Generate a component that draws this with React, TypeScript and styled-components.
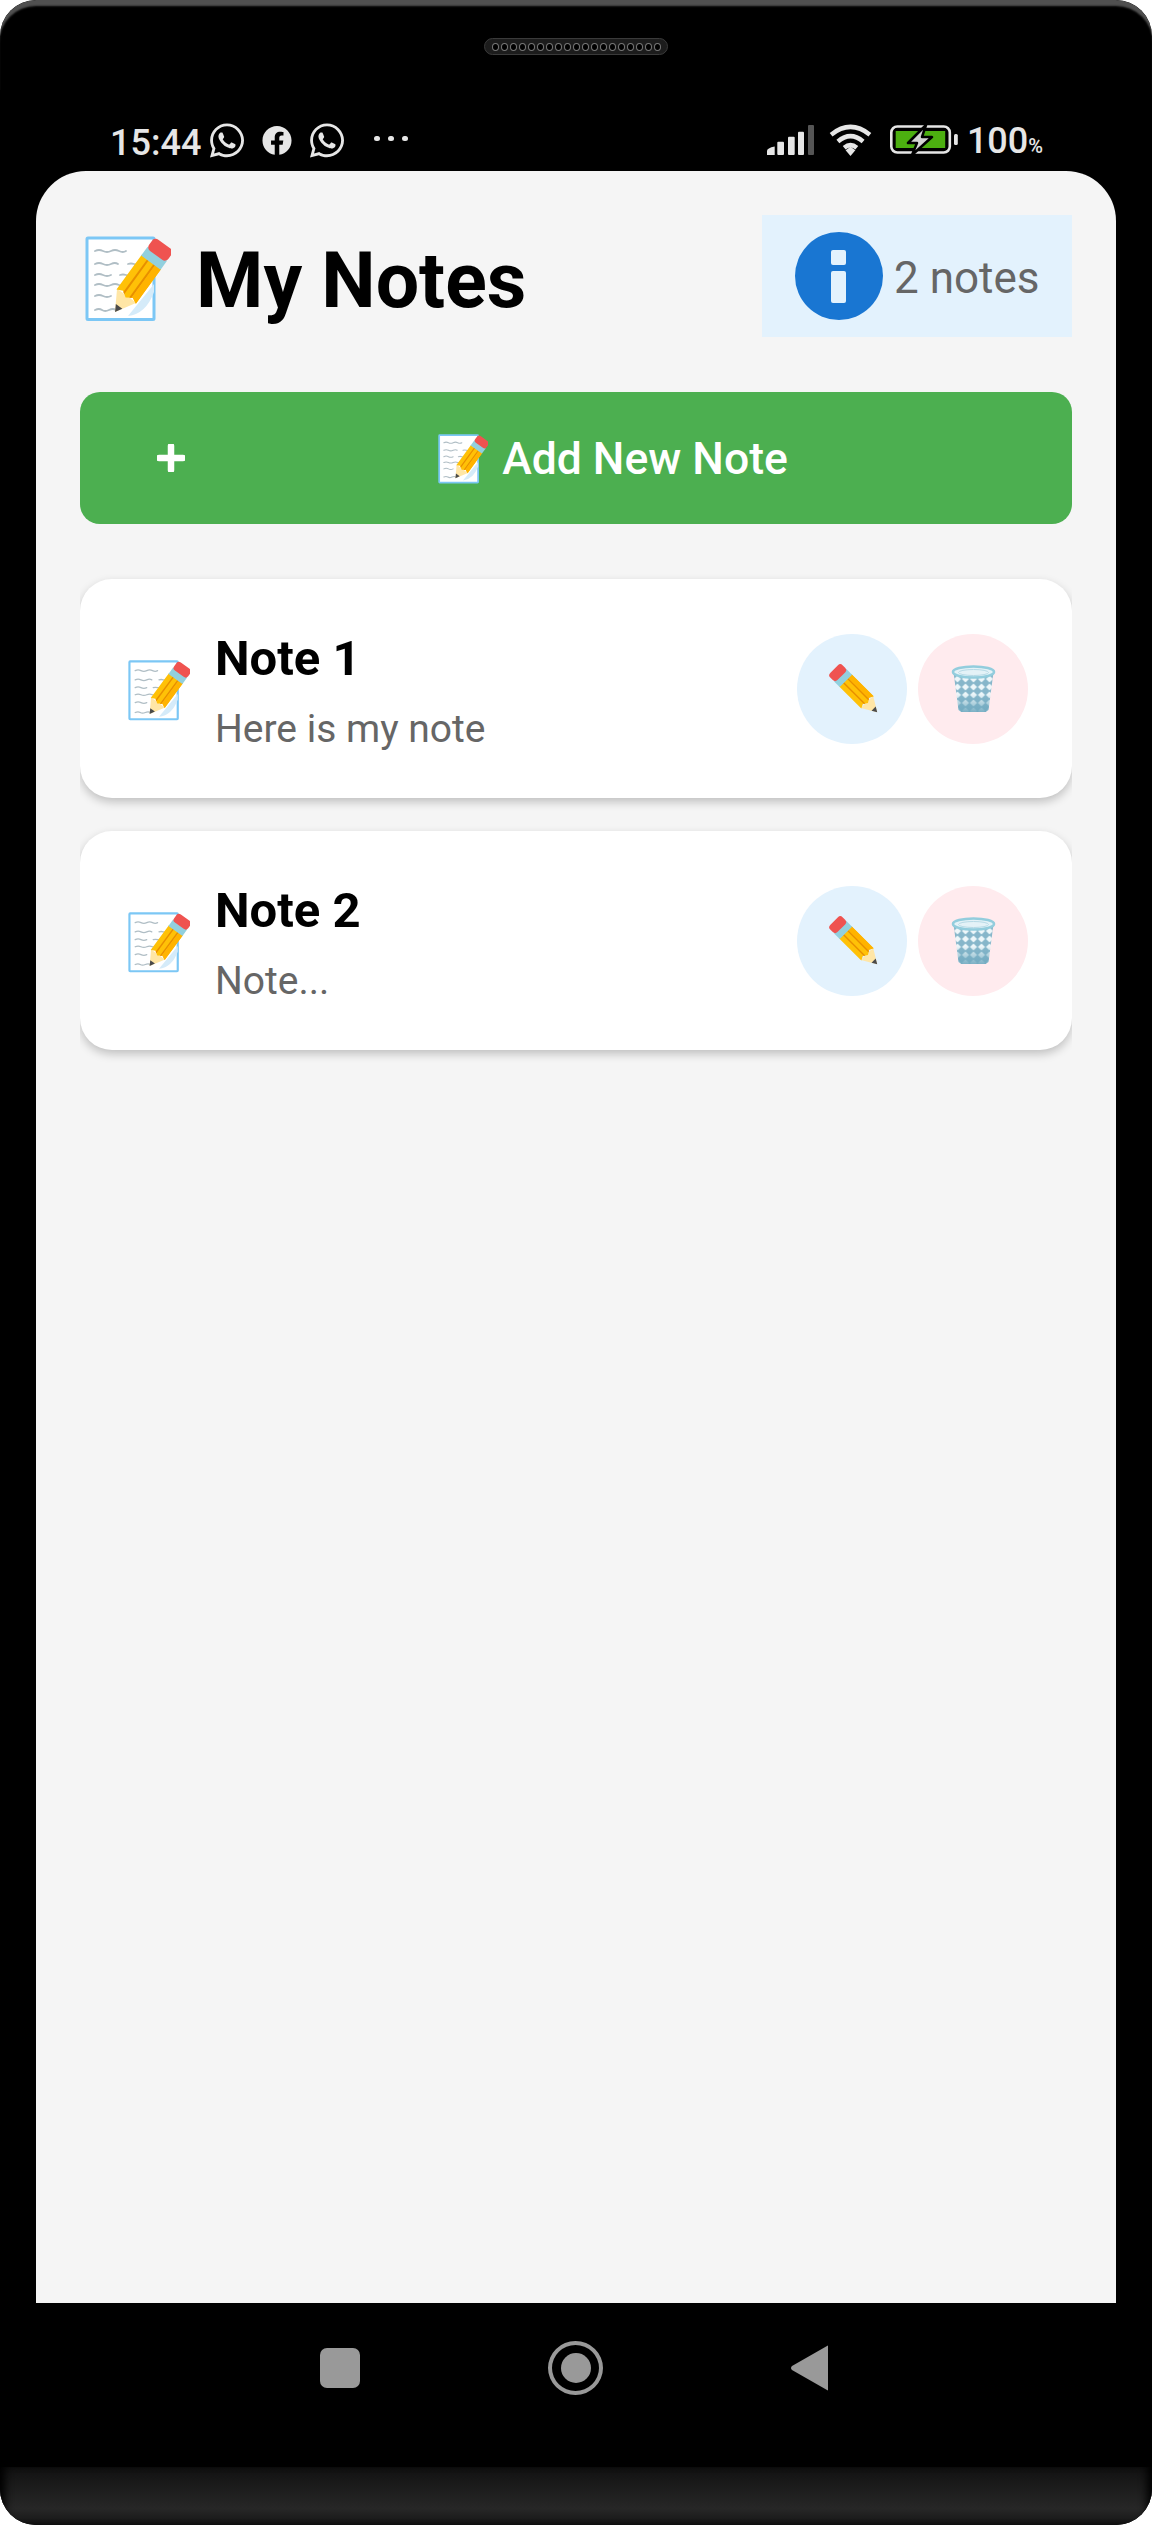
import React from "react";
import styled, { createGlobalStyle } from "styled-components";
import { FaWhatsapp, FaFacebook } from "react-icons/fa";

const Global = createGlobalStyle`
  html, body { margin: 0; padding: 0; background: #fff; }
  body { font-family: Roboto, "Noto Sans", sans-serif; }
  * { box-sizing: border-box; }
`;

const Phone = styled.div`
  position: relative;
  width: 1152px;
  height: 2525px;
  display: flex;
  flex-direction: column;
  background: #000;
  border-radius: 36px;
  overflow: hidden;
  &::before {
    content: "";
    position: absolute;
    left: 0;
    right: 0;
    top: 0;
    height: 90px;
    border-radius: 36px 36px 0 0;
    box-shadow: inset 0 7px 2px -1px #505050;
    pointer-events: none;
  }
`;

const Bezel = styled.div`
  height: 171px;
  padding-top: 38px;
  display: flex;
  flex-direction: column;
  align-items: center;
`;

const Speaker = styled.div`
  width: 184px;
  height: 17px;
  display: flex;
  align-items: center;
  justify-content: center;
  gap: 2px;
  background: #1c1c1c;
  border: 1px solid #3a3a3a;
  border-radius: 9px;
`;

const SpeakerHole = styled.span`
  width: 7px;
  height: 8px;
  border-radius: 50%;
  background: #000;
  border: 1px solid #777;
`;

const StatusBar = styled.div`
  width: 100%;
  height: 34px;
  margin-top: 68px;
  padding: 0 109px 0 110px;
  display: flex;
  align-items: center;
  justify-content: space-between;
  color: #e6e6e6;
`;

const StatusGroup = styled.div`
  display: flex;
  align-items: center;
`;

const Clock = styled.span`
  width: 91px;
  margin-right: 9px;
  margin-top: 6px;
  font-size: 36px;
  font-weight: 500;
  line-height: 34px;
  white-space: nowrap;
`;

const StatusApp = styled.span<{ $w: number; $size: number; $gap: number }>`
  width: ${(p) => p.$w}px;
  height: 34px;
  margin-right: ${(p) => p.$gap}px;
  display: flex;
  align-items: center;
  justify-content: center;
  font-size: ${(p) => p.$size}px;
`;

const Dots = styled.div`
  display: flex;
  gap: 8.5px;
  margin-top: -3px;
`;

const Dot = styled.span`
  width: 5.7px;
  height: 5.7px;
  border-radius: 50%;
  background: #e6e6e6;
`;

const StatusIcon = styled.svg<{ $w: number; $h: number; $mr: number }>`
  display: block;
  width: ${(p) => p.$w}px;
  height: ${(p) => p.$h}px;
  margin-right: ${(p) => p.$mr}px;
`;

const Percent = styled.span`
  margin-top: 6px;
  font-size: 36px;
  font-weight: 500;
  line-height: 34px;
  white-space: nowrap;
`;

const PercentSign = styled.span`
  font-size: 20px;
`;

const Screen = styled.main`
  width: 1080px;
  height: 2132px;
  margin: 0 36px;
  padding: 44px 44px 0;
  background: #f5f5f5;
  border-radius: 50px 50px 0 0;
`;

const Header = styled.header`
  height: 122px;
  display: flex;
  align-items: center;
  justify-content: space-between;
`;

const TitleRow = styled.div`
  padding: 6px 0 0 5px;
  display: flex;
  align-items: center;
`;

const Title = styled.h1`
  margin: 3px 0 0 25px;
  font-size: 77px;
  line-height: 90px;
  font-weight: 700;
  color: #000;
`;

const Badge = styled.div`
  width: 310px;
  height: 122px;
  padding-left: 33px;
  display: flex;
  align-items: center;
  gap: 11px;
  background: #e3f2fd;
`;

const InfoIcon = styled.svg`
  display: block;
  width: 88px;
  height: 88px;
`;

const BadgeText = styled.span`
  padding-top: 3px;
  font-size: 44px;
  line-height: 60px;
  color: #666;
`;

const AddButton = styled.button`
  width: 100%;
  height: 132px;
  margin-top: 55px;
  padding: 0 31px 0 77px;
  display: flex;
  align-items: center;
  border: 0;
  border-radius: 20px;
  background: #4caf50;
  color: #fff;
  font-family: inherit;
`;

const PlusIcon = styled.svg`
  display: block;
  flex: none;
  width: 28px;
  height: 28px;
`;

const AddLabel = styled.span`
  flex: 1;
  padding-top: 2px;
  display: flex;
  align-items: center;
  justify-content: center;
  gap: 14px;
  font-size: 44.5px;
  line-height: 60px;
  font-weight: 500;
`;

const CardList = styled.section`
  margin-top: 55px;
  display: flex;
  flex-direction: column;
  gap: 33px;
  overflow-x: clip;
  overflow-y: visible;
`;

const Card = styled.article`
  height: 219px;
  padding: 0 44px 0 48px;
  display: flex;
  align-items: center;
  background: #fff;
  border-radius: 32px;
  box-shadow: 0 4px 10px rgba(0, 0, 0, 0.22);
`;

const CardEmoji = styled.div`
  padding-top: 3px;
`;

const CardBody = styled.div`
  flex: 1;
  margin-left: 25px;
  padding-top: 6px;
`;

const CardTitle = styled.h2`
  margin: 0;
  font-size: 49px;
  line-height: 60px;
  font-weight: 700;
  color: #000;
`;

const CardText = styled.p`
  margin: 15px 0 0;
  font-size: 39px;
  line-height: 50px;
  color: #666;
`;

const RoundButton = styled.button<{ $bg: string }>`
  width: 110px;
  height: 110px;
  margin-left: 11px;
  padding: 0;
  display: flex;
  align-items: center;
  justify-content: center;
  border: 0;
  border-radius: 50%;
  background: ${(p) => p.$bg};
`;

const EmojiSvg = styled.svg<{ $w: number; $h: number }>`
  display: block;
  flex: none;
  width: ${(p) => p.$w}px;
  height: ${(p) => p.$h}px;
`;

const NavBar = styled.nav`
  height: 164px;
  padding: 0 3px 34px 0;
  display: flex;
  align-items: center;
  justify-content: center;
  gap: 188px;
`;

const NavSquare = styled.span`
  width: 40px;
  height: 40px;
  border-radius: 7px;
  background: #999;
`;

const NavCircle = styled.span`
  width: 55px;
  height: 54px;
  display: flex;
  align-items: center;
  justify-content: center;
  border: 4px solid #999;
  border-radius: 50%;
  &::after {
    content: "";
    width: 30px;
    height: 30px;
    border-radius: 50%;
    background: #999;
  }
`;

const NavBack = styled.svg`
  display: block;
  width: 38px;
  height: 46px;
`;

const Chin = styled.div`
  height: 58px;
  background: linear-gradient(#111 0%, #1f1f1f 45%, #272727 72%, #141414 100%);
  box-shadow: inset 9px 0 9px -4px #000, inset -9px 0 9px -4px #000;
`;

const PencilShape = () => (
  <>
    <polygon points="0,0 -12,-20 12,-20" fill="#ffe6a6" />
    <polygon points="0,0 -4,-7 4,-7" fill="#4a4a4a" />
    <polygon points="-12,-19 -12,-62 12,-62 12,-19 6,-22 0,-18 -6,-22" fill="#ffc107" />
    <polygon points="-5,-62 -3,-62 -3,-20 -5,-21" fill="#e88f00" />
    <polygon points="3,-62 5,-62 5,-21 3,-20" fill="#e88f00" />
    <polygon points="5,-62 12,-62 12,-19 6,-22 5,-21" fill="#ffb300" />
    <rect x="-12" y="-72" width="24" height="11" fill="#92d0de" />
    <rect x="-12" y="-84" width="24" height="14" rx="4.5" fill="#ef5350" />
  </>
);

const MemoEmoji = ({ w, h }: { w: number; h: number }) => (
  <EmojiSvg $w={w} $h={h} viewBox="15 12 86 86" preserveAspectRatio="none">
    <rect x="17" y="14" width="67" height="81.5" rx="1" fill="#fff" stroke="#7cc7f5" strokeWidth="3" />
    <path d="M58 92 Q76 90 84 68 L84 60 Z" fill="#d5ebf9" />
    <g fill="none" stroke="#b0bec5" strokeWidth="1.8" strokeLinecap="round">
      <path d="M25 27q4-2 8 0t8 0 8 0 7 0" />
      <path d="M25 40q4-2 8 0t8 0 7 0" />
      <path d="M58 40q3-1 6 0t6 0" />
      <path d="M25 51q4-2 8 0t8 0" />
      <path d="M50 51q3-1 6 0t6 0" />
      <path d="M25 61q4-2 8 0t8 0 8 0 8 0 8 0" />
      <path d="M25 72q4-2 8 0t8 0" />
      <path d="M25 86q4-2 7 0t7 0 7 0" />
    </g>
    <g transform="translate(45 88) rotate(36)">
      <PencilShape />
    </g>
  </EmojiSvg>
);

const PencilEmoji = () => (
  <EmojiSvg $w={52} $h={49} viewBox="0 0 68 64">
    <g transform="translate(67 63) rotate(-45) scale(0.95)">
      <PencilShape />
    </g>
  </EmojiSvg>
);

const TrashEmoji = ({ id }: { id: number }) => (
  <EmojiSvg $w={45} $h={47} viewBox="0 0 44 47">
    <defs>
      <pattern id={`lattice${id}`} width="8" height="8" patternUnits="userSpaceOnUse" patternTransform="translate(2 2)">
        <rect width="8" height="8" fill="#86b6ca" />
        <polygon points="4,0.5 7.5,4 4,7.5 0.5,4" fill="#eef7fa" />
      </pattern>
      <linearGradient id={`fade${id}`} x1="0" y1="0" x2="0" y2="1">
        <stop offset="0.55" stopColor="#6fa9bf" stopOpacity="0" />
        <stop offset="1" stopColor="#6fa9bf" stopOpacity="0.9" />
      </linearGradient>
    </defs>
    <polygon points="2,7 42,7 37,45 34,47 10,47 7,45" fill={`url(#lattice${id})`} />
    <polygon points="2,7 42,7 37,45 34,47 10,47 7,45" fill={`url(#fade${id})`} />
    <ellipse cx="22" cy="7" rx="20.5" ry="5.5" fill="#e4f2f7" stroke="#93cddd" strokeWidth="2.6" />
    <ellipse cx="22" cy="7.5" rx="15" ry="3" fill="none" stroke="#b7dae6" strokeWidth="1" />
  </EmojiSvg>
);

const notes = [
  { id: 1, title: "Note 1", text: "Here is my note" },
  { id: 2, title: "Note 2", text: "Note..." },
];

export default function App() {
  return (
    <>
      <Global />
      <Phone>
        <Bezel>
          <Speaker>
            {Array.from({ length: 19 }, (_, i) => (
              <SpeakerHole key={i} />
            ))}
          </Speaker>
          <StatusBar>
            <StatusGroup>
              <Clock>15:44</Clock>
              <StatusApp $w={34} $size={39} $gap={18}>
                <FaWhatsapp />
              </StatusApp>
              <StatusApp $w={30} $size={31} $gap={18}>
                <FaFacebook />
              </StatusApp>
              <StatusApp $w={34} $size={39} $gap={30}>
                <FaWhatsapp />
              </StatusApp>
              <Dots>
                <Dot />
                <Dot />
                <Dot />
              </Dots>
            </StatusGroup>
            <StatusGroup>
              <StatusIcon $w={47} $h={30} $mr={14} viewBox="0 0 47 30">
                <path d="M0 30v-4q0-3 7.7-4.5V30z" fill="#e6e6e6" />
                <rect x="10.3" y="16.7" width="6.7" height="13.3" rx="1" fill="#e6e6e6" />
                <rect x="21" y="11.7" width="6.7" height="18.3" rx="1" fill="#e6e6e6" />
                <rect x="31" y="6.7" width="6" height="23.3" rx="1" fill="#e6e6e6" />
                <rect x="41" y="0" width="6" height="30" rx="1" fill="#555" />
              </StatusIcon>
              <StatusIcon $w={45} $h={32} $mr={17} viewBox="0 0 44 33">
                <g fill="none" stroke="#e6e6e6" strokeWidth="4.6">
                  <path d="M2 11Q22 -5 42 11" />
                  <path d="M9 18Q22 7 35 18" />
                  <path d="M15.5 24.5Q22 19 28.5 24.5" />
                </g>
                <polygon points="17,27 22,23.5 27,27 22,33" fill="#e6e6e6" />
              </StatusIcon>
              <StatusIcon $w={68} $h={32} $mr={9} viewBox="0 0 68 32">
                <rect x="1.3" y="2.5" width="58.5" height="26" rx="6" fill="none" stroke="#e6e6e6" strokeWidth="2.6" />
                <rect x="5.7" y="7" width="49.5" height="17" fill="#4caf10" />
                <rect x="64" y="10" width="3.8" height="11" rx="1.5" fill="#e6e6e6" />
                <polygon points="36,1 18,19 27,19 22,31 42,13 32,13" fill="#d4d4d4" stroke="#000" strokeWidth="2.5" strokeLinejoin="round" />
              </StatusIcon>
              <Percent>
                100<PercentSign>%</PercentSign>
              </Percent>
            </StatusGroup>
          </StatusBar>
        </Bezel>
        <Screen>
          <Header>
            <TitleRow>
              <MemoEmoji w={86} h={86} />
              <Title>My Notes</Title>
            </TitleRow>
            <Badge>
              <InfoIcon viewBox="0 0 88 88">
                <circle cx="44" cy="44" r="44" fill="#1976d2" />
                <rect x="36" y="18" width="15" height="15" rx="2" fill="#e3f2fd" />
                <rect x="36" y="39" width="15" height="32" rx="2" fill="#e3f2fd" />
              </InfoIcon>
              <BadgeText>2 notes</BadgeText>
            </Badge>
          </Header>
          <AddButton>
            <PlusIcon viewBox="0 0 28 28">
              <path d="M14 2v24M2 14h24" stroke="#fff" strokeWidth="6.5" strokeLinecap="round" />
            </PlusIcon>
            <AddLabel>
              <MemoEmoji w={50} h={50} />
              Add New Note
            </AddLabel>
          </AddButton>
          <CardList>
            {notes.map((n) => (
              <Card key={n.id}>
                <CardEmoji>
                  <MemoEmoji w={62} h={61} />
                </CardEmoji>
                <CardBody>
                  <CardTitle>{n.title}</CardTitle>
                  <CardText>{n.text}</CardText>
                </CardBody>
                <RoundButton $bg="#e3f2fd">
                  <PencilEmoji />
                </RoundButton>
                <RoundButton $bg="#ffebee">
                  <TrashEmoji id={n.id} />
                </RoundButton>
              </Card>
            ))}
          </CardList>
        </Screen>
        <NavBar>
          <NavSquare />
          <NavCircle />
          <NavBack viewBox="0 0 38 46">
            <path d="M37 1.5 V44.5 Q37 46 36 45 L1 25 Q-1 23 1 21 L36 1 Q37 0 37 1.5Z" fill="#999" />
          </NavBack>
        </NavBar>
        <Chin />
      </Phone>
    </>
  );
}
